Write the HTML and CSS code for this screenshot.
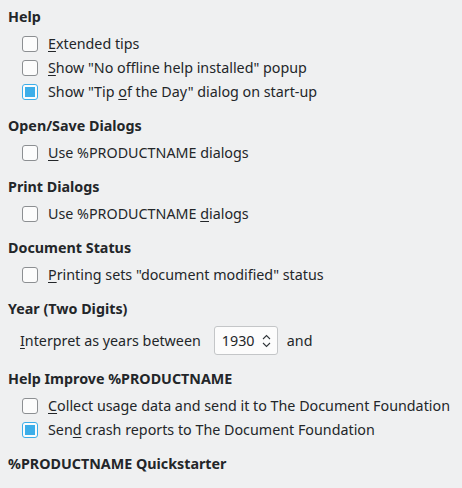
FILE: index.html
```html
<!DOCTYPE html>
<html>
<head>
<meta charset="utf-8">
<link rel="stylesheet" href="styles.css">
</head>
<body>
<div class="page">
  <section class="group">
    <h2 class="title">Help</h2>
    <div class="rows">
      <label class="check"><span class="box"></span><span><u>E</u>xtended tips</span></label>
      <label class="check"><span class="box"></span><span><u>S</u>how "No offline help installed" popup</span></label>
      <label class="check"><span class="box on"></span><span>Show "Tip <u>o</u>f the Day" dialog on start-up</span></label>
    </div>
  </section>
  <section class="group">
    <h2 class="title">Open/Save Dialogs</h2>
    <div class="rows">
      <label class="check"><span class="box"></span><span><u>U</u>se %PRODUCTNAME dialogs</span></label>
    </div>
  </section>
  <section class="group">
    <h2 class="title">Print Dialogs</h2>
    <div class="rows">
      <label class="check"><span class="box"></span><span>Use %PRODUCTNAME <u>d</u>ialogs</span></label>
    </div>
  </section>
  <section class="group">
    <h2 class="title">Document Status</h2>
    <div class="rows">
      <label class="check"><span class="box"></span><span><u>P</u>rinting sets "document modified" status</span></label>
    </div>
  </section>
  <section class="group">
    <h2 class="title">Year (Two Digits)</h2>
    <div class="year">
      <span><u>I</u>nterpret as years between</span>
      <span class="spin"><span class="val">1930</span>
        <svg class="arrows" width="9" height="20" viewBox="0 0 9 20"><path d="M1 8 L4.5 4.5 L8 8 M1 12 L4.5 15.5 L8 12" fill="none" stroke="#31363b" stroke-width="1.1"/></svg>
      </span>
      <span>and</span>
    </div>
  </section>
  <section class="group">
    <h2 class="title">Help Improve %PRODUCTNAME</h2>
    <div class="rows">
      <label class="check"><span class="box"></span><span><u>C</u>ollect usage data and send it to The Document Foundation</span></label>
      <label class="check"><span class="box on"></span><span>Sen<u>d</u> crash reports to The Document Foundation</span></label>
    </div>
  </section>
  <section class="group">
    <h2 class="title">%PRODUCTNAME Quickstarter</h2>
  </section>
</div>
</body>
</html>
```
FILE: styles.css
```css
html, body {
  margin: 0;
  padding: 0;
  background: #eff0f1;
}
body {
  font-family: "Noto Sans", "DejaVu Sans", sans-serif;
  font-size: 14.3px;
  color: #232629;
}
.page {
  padding: 7px 8px 0 8px;
  display: flex;
  flex-direction: column;
  gap: 14px;
}
.title {
  margin: 0;
  font-size: 14.3px;
  font-weight: bold;
  line-height: 20px;
}
.rows {
  display: flex;
  flex-direction: column;
  gap: 4px;
  padding-top: 7px;
  padding-left: 14px;
}
.check {
  display: flex;
  align-items: center;
  gap: 10px;
  height: 20px;
  line-height: 20px;
}
.check u, .year u {
  text-decoration: underline;
  text-underline-offset: 2px;
}
.box {
  width: 14px;
  height: 14px;
  border: 1px solid #8c8f92;
  border-radius: 3px;
  background: #fcfcfc;
  flex: none;
  position: relative;
}
.box.on {
  border-color: #3daee9;
}
.box.on::after {
  content: "";
  position: absolute;
  left: 2px;
  top: 2px;
  width: 10px;
  height: 10px;
  background: #3daee9;
}
.year {
  display: flex;
  align-items: center;
  padding-left: 12px;
  padding-top: 7px;
}
.spin {
  box-sizing: border-box;
  width: 64px;
  height: 29px;
  margin: 0 9px 0 13px;
  border: 1px solid #c4c6c8;
  border-radius: 3px;
  background: #fcfcfc;
  display: flex;
  align-items: center;
  padding-left: 7px;
  padding-right: 6px;
  justify-content: space-between;
}
.arrows {
  display: block;
}
```
